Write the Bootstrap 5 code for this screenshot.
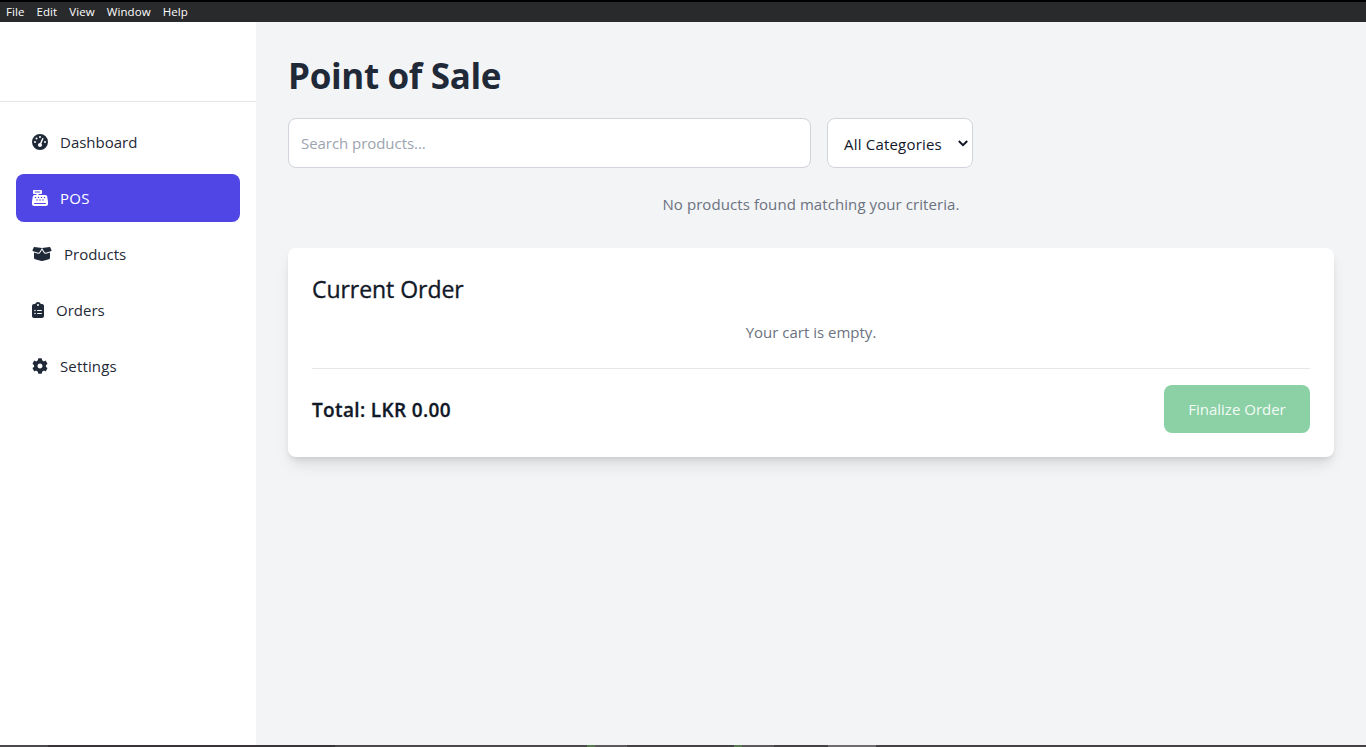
<!DOCTYPE html>
<html lang="en">
<head>
<meta charset="utf-8">
<meta name="viewport" content="width=device-width, initial-scale=1">
<title>Point of Sale</title>
<link href="https://cdn.jsdelivr.net/npm/bootstrap@5.3.0/dist/css/bootstrap.min.css" rel="stylesheet">
<style>
body{font-family:"Segoe UI","Open Sans","Noto Sans",sans-serif;font-size:15px;line-height:24px;color:#111827;background:#f3f4f6}
.menubar{height:22px;background:#292a2b;border-top:2px solid #000;padding-left:6px;gap:12px;font-size:11.5px;line-height:19px;letter-spacing:.08px}
.sidebar{width:256px}
.brand{height:80px;border-bottom:1px solid #e5e7eb}
.side-link{height:48px;padding:0 16px;gap:12px;border-radius:8px;color:#1f2937;text-decoration:none}
.side-link svg{height:16px;fill:currentColor}
.side-link.active{background:#4f46e5;color:#fff}
.side-link.active span{letter-spacing:.3px}
.page-title{font-size:35px;line-height:40px;font-weight:700;color:#1f2937;letter-spacing:-.35px;padding-top:2px;height:40px}
.search-box{width:523px;height:50px;border:1px solid #d1d5db;border-radius:8px;padding:0 12px;font-size:15px;letter-spacing:-.05px}
.search-box::placeholder{color:#9ca3af}
.category-box{width:146px;height:50px;border:1px solid #d1d5db;border-radius:8px;background:#fff;padding:2px 4px 0 16px;letter-spacing:.2px}
.hint{color:#6b7280}
.no-match{letter-spacing:.08px;margin-bottom:32px}
.order-card{border:0;border-radius:8px;padding:24px;box-shadow:0 10px 15px -3px rgba(0,0,0,.1),0 4px 6px -2px rgba(0,0,0,.1)}
.order-title{font-size:23px;line-height:32px;font-weight:400;height:32px;padding-top:1px;letter-spacing:-.05px;-webkit-text-stroke:.35px currentColor}
.order-foot{border-top:1px solid #e5e7eb;padding-top:16px}
.order-total{font-size:19px;line-height:28px;padding-top:2px;font-weight:600;letter-spacing:.36px;-webkit-text-stroke:.3px currentColor}
.finalize{width:146px;height:48px;border:0;border-radius:8px;background:#8bd1a5;font-size:15px;padding:0}
.finalize:disabled{background:#8bd1a5;color:rgba(255,255,255,.93);opacity:1}
.taskbar{height:2px;background:linear-gradient(90deg,#4a484a 48px,#383337 48px 335px,#4a484a 335px 587px,#56794f 587px 595px,#5a585a 595px 627px,#444145 627px 734px,#56794f 734px 742px,#5a585a 742px 774px,#444145 774px 828px,#706d71 828px 876px,#444145 876px)}
</style>
</head>
<body class="vh-100 d-flex flex-column overflow-hidden">
<div class="menubar d-flex text-white flex-shrink-0">
  <span>File</span><span>Edit</span><span>View</span><span>Window</span><span>Help</span>
</div>
<div class="d-flex flex-grow-1">
  <aside class="sidebar bg-white flex-shrink-0">
    <div class="brand"></div>
    <nav class="d-flex flex-column gap-2 p-3">
      <a href="#" class="side-link d-flex align-items-center"><svg viewBox="0 0 512 512"><path d="M0 256a256 256 0 1 1 512 0A256 256 0 1 1 0 256zM288 96a32 32 0 1 0 -64 0 32 32 0 1 0 64 0zM256 416c35.3 0 64-28.7 64-64c0-17.4-6.9-33.1-18.1-44.6L366 161.7c5.3-12.1-.2-26.3-12.3-31.6s-26.3 .2-31.6 12.3L257.9 288c-.6 0-1.3 0-1.9 0c-35.3 0-64 28.7-64 64s28.7 64 64 64zM176 144a32 32 0 1 0 -64 0 32 32 0 1 0 64 0zM96 288a32 32 0 1 0 0-64 32 32 0 1 0 0 64zm352-32a32 32 0 1 0 -64 0 32 32 0 1 0 64 0z"/></svg><span>Dashboard</span></a>
      <a href="#" class="side-link active d-flex align-items-center"><svg viewBox="0 0 512 512"><path d="M64 0C46.3 0 32 14.3 32 32V96c0 17.7 14.3 32 32 32h80v32H87c-31.6 0-58.5 23.1-63.3 54.4L1.1 364.1C.4 368.8 0 373.6 0 378.4V448c0 35.3 28.7 64 64 64H448c35.3 0 64-28.7 64-64V378.4c0-4.8-.4-9.6-1.1-14.4L488.2 214.4C483.5 183.1 456.6 160 425 160H208V128h80c17.7 0 32-14.3 32-32V32c0-17.7-14.3-32-32-32H64zM96 48H256c8.8 0 16 7.2 16 16s-7.2 16-16 16H96c-8.8 0-16-7.2-16-16s7.2-16 16-16zM64 432c0-8.8 7.2-16 16-16H432c8.8 0 16 7.2 16 16s-7.2 16-16 16H80c-8.8 0-16-7.2-16-16zm48-168a24 24 0 1 1 0-48 24 24 0 1 1 0 48zm120-24a24 24 0 1 1 -48 0 24 24 0 1 1 48 0zM160 344a24 24 0 1 1 0-48 24 24 0 1 1 0 48zM328 240a24 24 0 1 1 -48 0 24 24 0 1 1 48 0zM256 344a24 24 0 1 1 0-48 24 24 0 1 1 0 48zM424 240a24 24 0 1 1 -48 0 24 24 0 1 1 48 0zM352 344a24 24 0 1 1 0-48 24 24 0 1 1 0 48z"/></svg><span>POS</span></a>
      <a href="#" class="side-link d-flex align-items-center"><svg viewBox="0 0 640 512"><path d="M58.9 42.1c3-6.1 9.6-9.6 16.3-8.7L320 64 564.8 33.4c6.7-.8 13.3 2.7 16.3 8.7l41.7 83.4c9 17.9-.6 39.6-19.8 45.1L439.6 217.3c-13.9 4-28.8-1.9-36.2-14.3L320 64 236.6 203c-7.4 12.4-22.3 18.3-36.2 14.3L37.1 170.6c-19.3-5.5-28.8-27.2-19.8-45.1L58.9 42.1zM321.1 128l54.9 91.4c14.9 24.8 44.6 36.6 72.5 28.6L576 211.6v167c0 22-15 41.2-36.4 46.6l-204.1 51c-10.2 2.6-20.9 2.6-31 0l-204.1-51C79 419.7 64 400.5 64 378.5v-167L191.6 248c27.8 8 57.6-3.8 72.5-28.6L318.9 128h2.2z"/></svg><span>Products</span></a>
      <a href="#" class="side-link d-flex align-items-center"><svg viewBox="0 0 384 512"><path d="M192 0c-41.8 0-77.4 26.7-90.5 64H64C28.7 64 0 92.7 0 128V448c0 35.3 28.7 64 64 64H320c35.3 0 64-28.7 64-64V128c0-35.3-28.7-64-64-64H282.5C269.4 26.7 233.8 0 192 0zm0 64a32 32 0 1 1 0 64 32 32 0 1 1 0-64zM72 272a24 24 0 1 1 48 0 24 24 0 1 1 -48 0zm104-16H304c8.8 0 16 7.2 16 16s-7.2 16-16 16H176c-8.8 0-16-7.2-16-16s7.2-16 16-16zM72 368a24 24 0 1 1 48 0 24 24 0 1 1 -48 0zm88 0c0-8.8 7.2-16 16-16H304c8.8 0 16 7.2 16 16s-7.2 16-16 16H176c-8.8 0-16-7.2-16-16z"/></svg><span>Orders</span></a>
      <a href="#" class="side-link d-flex align-items-center"><svg viewBox="0 0 512 512"><path d="M487.4 315.7l-42.6-24.6c4.3-23.2 4.3-47 0-70.2l42.6-24.6c4.9-2.8 7.1-8.6 5.5-14-11.1-35.6-30-67.8-54.7-94.6-3.8-4.1-10-5.1-14.8-2.3L380.8 110c-17.9-15.4-38.5-27.3-60.8-35.1V25.8c0-5.6-3.9-10.5-9.4-11.7-36.7-8.2-74.3-7.8-109.2 0-5.5 1.2-9.4 6.1-9.4 11.7V75c-22.2 7.9-42.8 19.8-60.8 35.1L88.7 85.5c-4.9-2.8-11-1.9-14.8 2.3-24.7 26.7-43.6 58.9-54.7 94.6-1.7 5.4.6 11.2 5.5 14L67.3 221c-4.3 23.2-4.3 47 0 70.2l-42.6 24.6c-4.9 2.8-7.1 8.6-5.5 14 11.1 35.6 30 67.8 54.7 94.6 3.8 4.1 10 5.1 14.8 2.3l42.6-24.6c17.9 15.4 38.5 27.3 60.8 35.1v49.2c0 5.6 3.9 10.5 9.4 11.7 36.7 8.2 74.3 7.8 109.2 0 5.5-1.2 9.4-6.1 9.4-11.7v-49.2c22.2-7.9 42.8-19.8 60.8-35.1l42.6 24.6c4.9 2.8 11 1.9 14.8-2.3 24.7-26.7 43.6-58.9 54.7-94.6 1.5-5.5-.7-11.3-5.6-14.1zM256 336c-44.1 0-80-35.9-80-80s35.9-80 80-80 80 35.9 80 80-35.9 80-80 80z"/></svg><span style="letter-spacing:.14px">Settings</span></a>
    </nav>
  </aside>
  <main class="flex-grow-1" style="padding:32px">
    <h1 class="page-title mb-4">Point of Sale</h1>
    <div class="d-flex gap-3 mb-4">
      <input class="form-control search-box" type="text" placeholder="Search products...">
      <div class="category-box d-flex align-items-center justify-content-between" role="button" tabindex="0"><span>All Categories</span><svg width="10" height="8" viewBox="0 0 10 8" fill="none" stroke="#111827" stroke-width="2"><path d="M.8 1 5 5.2 9.2 1"/></svg></div>
    </div>
    <p class="hint no-match text-center">No products found matching your criteria.</p>
    <section class="card order-card">
      <h2 class="order-title mb-3">Current Order</h2>
      <p class="hint text-center mb-4">Your cart is empty.</p>
      <div class="order-foot d-flex justify-content-between align-items-center">
        <span class="order-total">Total: LKR 0.00</span>
        <button class="btn finalize" disabled>Finalize Order</button>
      </div>
    </section>
  </main>
</div>
<footer class="taskbar flex-shrink-0"></footer>
<script src="https://cdn.jsdelivr.net/npm/bootstrap@5.3.0/dist/js/bootstrap.bundle.min.js"></script>
</body>
</html>
